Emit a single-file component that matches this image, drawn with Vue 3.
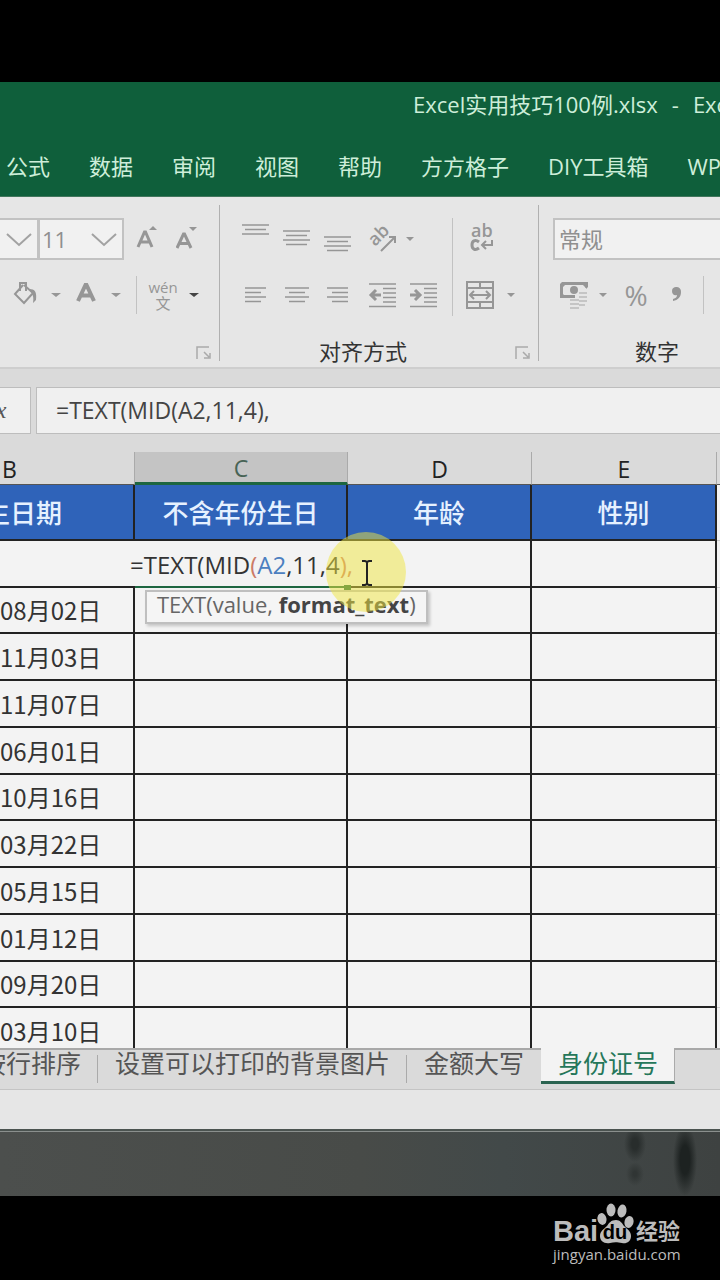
<template>
  <div class="screen">
    <header class="titlebar">
      <div class="doc-title">
        <span>Excel实用技巧100例.xlsx</span><span class="dash">-</span><span>Excel</span>
      </div>
      <nav class="menu">
        <a v-for="m in menus" :key="m" href="#">{{ m }}</a>
      </nav>
    </header>

    <section class="ribbon">
      <div class="group font-group">
        <div class="tools">
          <div class="row">
            <div class="combo combo-font">
              <select aria-label="字体"><option></option></select>
              <svg class="chevron" width="28" height="16" viewBox="0 0 28 16"><path d="M2 2l12 11L26 2" /></svg>
            </div>
            <div class="combo combo-size">
              <select aria-label="字号"><option>11</option></select>
              <svg class="chevron" width="28" height="16" viewBox="0 0 28 16"><path d="M2 2l12 11L26 2" /></svg>
            </div>
            <button class="tool wide first" aria-label="增大字号">
              <svg width="24" height="28" viewBox="0 0 24 28"><path class="line bold" d="M3 22L9.500 7h1L17 22M5.500 17h9" /><path class="solid" d="M14 5l4-4 4 4z" /></svg>
            </button>
            <button class="tool wide" aria-label="减小字号">
              <svg width="24" height="28" viewBox="0 0 24 28"><path class="line bold" d="M1 23L7.500 9h1L15 23M3.500 18.500h9" /><path class="solid" d="M13 2h8l-4 4z" /></svg>
            </button>
          </div>
          <div class="row fill-row">
            <button class="tool small" aria-label="填充颜色">
              <svg width="28" height="28" viewBox="0 0 28 28"><path class="line mid" d="M11 4L3 13l9 9 9-10-9-8M8 10V2h6v8" /><path class="solid" d="M17 8c6 0 8 3 7 11l-3 3c1-6 0-9-4-14z" /></svg>
            </button>
            <button class="tool drop" aria-label="更多填充颜色"><svg width="10" height="6"><path class="solid" d="M0 1h10L5 5z" /></svg></button>
            <button class="tool small" aria-label="字体颜色">
              <svg width="24" height="28" viewBox="0 0 24 28"><path class="line thick" d="M4 20L11.500 4h1L20 20M7 14.500h10" /></svg>
            </button>
            <button class="tool drop" aria-label="更多字体颜色"><svg width="10" height="6"><path class="solid" d="M0 1h10L5 5z" /></svg></button>
            <i class="divider short"></i>
            <button class="tool pinyin"><span>wén</span><span>文</span></button>
            <button class="tool drop dark" aria-label="拼音选项"><svg width="10" height="6"><path class="solid" d="M0 1h10L5 5z" /></svg></button>
          </div>
        </div>
        <svg class="launcher" width="16" height="16" viewBox="0 0 16 16"><path d="M1 14V2h12M8 7l5 5M14 8v5H8" /></svg>
      </div>

      <div class="group align-group">
        <div class="split">
          <div class="tools">
            <div class="row">
              <button v-for="(d, i) in vAlign" :key="i" class="tool wide" :aria-label="vNames[i]">
                <svg width="28" height="36" viewBox="0 0 28 36"><path class="line" :d="d" /></svg>
              </button>
              <button class="tool wide orient" aria-label="方向">
                <svg width="30" height="30" viewBox="0 0 30 30">
                  <text class="ab" x="8" y="23" transform="rotate(-45 8 23)">ab</text>
                  <path class="line mid" d="M14 27L28 13M22 13h6v6" />
                </svg>
              </button>
              <button class="tool drop" aria-label="更多方向"><svg width="8" height="6"><path class="solid" d="M0 1h8L4 5z" /></svg></button>
            </div>
            <div class="row">
              <button v-for="(d, i) in hAlign" :key="i" class="tool wide" :aria-label="hNames[i]">
                <svg width="28" height="28" viewBox="0 0 28 28"><path class="line" :d="d" /></svg>
              </button>
              <button class="tool wide orient" aria-label="减少缩进量">
                <svg width="28" height="28" viewBox="0 0 28 28"><path class="line" d="M1 3h27M15 7.500h13M15 12h13M15 16.500h13M15 21h13M1 25.500h27" /><path class="line heavy" d="M13 14H3M8 9l-5 5 5 5" /></svg>
              </button>
              <button class="tool wide" aria-label="增加缩进量">
                <svg width="28" height="28" viewBox="0 0 28 28"><path class="line" d="M1 3h27M15 7.500h13M15 12h13M15 16.500h13M15 21h13M1 25.500h27" /><path class="line heavy" d="M1 14h10M6 9l5 5-5 5" /></svg>
              </button>
            </div>
          </div>
          <i class="divider tall"></i>
          <div class="tools">
            <div class="row">
              <button class="tool wrap" aria-label="自动换行">
                <svg width="28" height="32" viewBox="0 0 28 32">
                  <text class="ab" x="5" y="14">ab</text>
                  <path class="line heavy" d="M13 19c-4-3-7-1-7 3s3 6 7 3" />
                  <path class="line mid" d="M26 17v5H16M20 18l-4 4 4 4" />
                </svg>
              </button>
            </div>
            <div class="row">
              <button class="tool wrap" aria-label="合并后居中">
                <svg width="28" height="30" viewBox="0 0 28 30"><path class="line mid" d="M1 2h26v26H1zM1 8h26M1 22h26M14 2v6M14 22v6M4 15h20M8 11l-4 4 4 4M20 11l4 4-4 4" /></svg>
              </button>
              <button class="tool drop" aria-label="合并选项"><svg width="8" height="6"><path class="solid" d="M0 1h8L4 5z" /></svg></button>
            </div>
          </div>
        </div>
        <div class="group-name">对齐方式</div>
        <svg class="launcher" width="16" height="16" viewBox="0 0 16 16"><path d="M1 14V2h12M8 7l5 5M14 8v5H8" /></svg>
      </div>

      <div class="group number-group">
        <div class="tools">
          <div class="row">
            <div class="combo combo-format">
              <select aria-label="数字格式"><option>常规</option></select>
            </div>
          </div>
          <div class="row number-row">
            <button class="tool money" aria-label="会计数字格式">
              <svg width="30" height="30" viewBox="0 0 30 30">
                <path class="line heavy" d="M2.500 3.500h25v4M16 16.500H2.500v-13" />
                <path class="solid" d="M2 3h6L2 9zM28 3h-6l6 6zM2 17v-5l5 5z" /><circle class="solid" cx="15" cy="10" r="4" />
                <path class="line faint" d="M20 13h8M20 17h8M20 21h8M20 25h6M11 20h9M11 24h9M11 28h9" />
              </svg>
            </button>
            <button class="tool drop" aria-label="更多货币"><svg width="8" height="6"><path class="solid" d="M0 1h8L4 5z" /></svg></button>
            <button class="tool percent">%</button>
            <button class="tool comma" aria-label="千位分隔样式">
              <svg width="12" height="18" viewBox="0 0 12 18"><path class="solid" d="M5 1a4.500 4.500 0 0 1 5 5c0 5-3 8-8 9v-2c3-1 4-2 4-4-3 1-5-1-5-4s2-4 4-4z" /></svg>
            </button>
            <i class="divider short"></i>
          </div>
        </div>
        <div class="group-name">数字</div>
      </div>
    </section>

    <section class="formula-bar">
      <button class="fx">fx</button>
      <input class="formula" type="text" aria-label="编辑栏" value="=TEXT(MID(A2,11,4)," />
    </section>

    <main class="sheet">
      <table>
        <colgroup><col class="b" /><col class="c" /><col class="d" /><col class="e" /><col /></colgroup>
        <thead>
          <tr class="letters"><th class="letter-b"><span>B</span></th><th class="picked">C</th><th>D</th><th>E</th><th></th></tr>
          <tr class="titles"><th class="date-title"><span>出生日期</span></th><th>不含年份生日</th><th>年龄</th><th>性别</th><th class="rest"></th></tr>
        </thead>
        <tbody>
          <tr class="editing">
            <td></td>
            <td class="active">
              <div class="editor">=TEXT(MID<span class="paren">(</span><span class="ref">A2</span>,11,4<span class="paren">),</span></div>
              <div class="hint">TEXT(value, <b>format_text</b>)</div>
              <i class="handle"></i>
              <svg class="pointer" width="82" height="82" viewBox="0 0 82 82">
                <circle cx="41" cy="41" r="40" />
                <path d="M37 30h3l2 1 2-1h3M42 31v22M37 54h3l2-1 2 1h3" />
              </svg>
            </td>
            <td></td><td></td><td class="rest"></td>
          </tr>
          <tr v-for="d in dates" :key="d"><td class="date">{{ d }}</td><td></td><td></td><td></td><td class="rest"></td></tr>
        </tbody>
      </table>
    </main>

    <nav class="tabs">
      <a class="tab sort" href="#"><span>按行排序</span></a>
      <a class="tab print" href="#">设置可以打印的背景图片</a>
      <a class="tab money-tab" href="#">金额大写</a>
      <a class="tab current" href="#">身份证号</a>
    </nav>
    <div class="statusbar"></div>
    <div class="desk"></div>

    <footer class="brand">
      <div class="brand-box">
        <div class="logo">
          <span class="bai">Bai</span>
          <svg class="paw" width="40" height="42" viewBox="0 0 40 42">
            <ellipse cx="6" cy="17" rx="4.500" ry="6" transform="rotate(-12 6 17)" />
            <ellipse cx="15" cy="8" rx="4.500" ry="6.500" />
            <ellipse cx="26" cy="9" rx="4.500" ry="6.500" transform="rotate(10 26 9)" />
            <ellipse cx="33" cy="20" rx="4.500" ry="6" transform="rotate(15 33 20)" />
            <path d="M20 18c4 0 6 3 8 6 3 3 7 5 7 10 0 6-5 8-9 7-5-1-8-1-12 0-6 1-10-2-10-7s4-7 7-10c2-3 4-6 9-6z" />
            <text x="19" y="37" text-anchor="middle">du</text>
          </svg>
          <span class="jy">经验</span>
        </div>
        <div class="url">jingyan.baidu.com</div>
      </div>
    </footer>
  </div>
</template>

<script setup>
const menus = ['公式', '数据', '审阅', '视图', '帮助', '方方格子', 'DIY工具箱', 'WPS']

const dates = [
  '08月02日', '11月03日', '11月07日', '06月01日', '10月16日',
  '03月22日', '05月15日', '01月12日', '09月20日', '03月10日'
]

const vNames = ['顶端对齐', '垂直居中', '底端对齐']
const vAlign = [
  'M0 4h27M3 8.5h21M0 13h27',
  'M0 10h27M3 14.5h21M0 19h27M3 23.5h21',
  'M0 16h27M3 20.5h21M0 25h27M3 29.5h21'
]
const hNames = ['左对齐', '居中', '右对齐']
const hAlign = [
  'M3 7h21M3 11.5h16M3 16h21M3 20.5h16',
  'M2 7h24M6 11.5h16M2 16h24M6 20.5h16',
  'M3 7h21M8 11.5h16M3 16h21M8 20.5h16'
]
</script>

<style>
body { margin:0; background:#000; }
</style>

<style scoped>
.screen { padding-top:82px; overflow:hidden; font-family:"Open Sans","Noto Sans CJK SC",sans-serif; color:#333; }
.screen * { box-sizing:border-box; }
a { color:inherit; text-decoration:none; }
button { padding:0; border:0; background:none; font-family:inherit; }
button svg { display:block; flex:none; }

.titlebar { height:115px; background:#0f5f3b; color:#cdeed9; white-space:nowrap; border-bottom:1px solid #41765c; }
.doc-title { display:flex; padding-left:413px; font-size:22px; line-height:44px; }
.dash { margin:0 14px; }
.menu { display:flex; gap:39px; padding:21px 0 0 6px; font-size:22px; line-height:38px; }

.ribbon { display:flex; height:172px; background:#e6e6e6; border-bottom:2px solid #cecece; }
.group { position:relative; padding-top:21px; flex:none; }
.group::after { content:""; position:absolute; right:0; top:8px; bottom:6px; width:1px; background:#b0b0b0; }
.font-group { width:220px; }
.align-group { width:319px; padding-left:15px; }
.number-group { flex:1; min-width:181px; padding-left:14px; overflow:hidden; }
.number-group::after { display:none; }
.split { display:flex; }
.tools { display:flex; flex-direction:column; gap:14px; }
.row { display:flex; align-items:center; height:42px; }
.group-name { margin-top:19px; font-size:22px; line-height:32px; color:#333; }
.align-group .group-name { padding-left:84px; }
.number-group .group-name { padding-left:82px; }
.tool { display:flex; align-items:center; justify-content:center; height:42px; flex:none; color:#969696; }
.tool.wide { width:41px; }
.tool.wide.first { margin-left:2px; }
.tool.small { width:36px; }
.tool.drop { width:24px; }
.tool.orient { margin-left:3px; }
.orient + .drop { width:16px; }
.tool.wrap { width:54px; }
.wrap + .drop { width:8px; }
.fill-row { padding-left:8px; }
.number-row { padding-left:4px; }
.tool.money { width:34px; }
.tool.percent { width:42px; font-size:28px; }
.tool.comma { width:40px; }
.tool.pinyin { flex-direction:column; width:52px; font-size:15px; line-height:16px; }
.pinyin + .drop { width:10px; color:#444; }
.divider { width:1px; height:38px; background:#c2c2c2; flex:none; }
.fill-row .divider { margin-left:8px; }
.number-row .divider { margin-left:6px; }
.divider.tall { height:98px; }
.align-group .split > .tools:first-child { width:217px; }
.line { fill:none; stroke:currentColor; stroke-width:1.5; }
.line.mid { stroke-width:2; }
.line.bold { stroke-width:3; }
.line.heavy { stroke-width:3; }
.line.thick { stroke-width:4; }
.line.faint { stroke:#bbb; }
.solid { fill:currentColor; }
.ab { font-size:18px; font-weight:600; fill:currentColor; }
.launcher { position:absolute; right:8px; bottom:6px; fill:none; stroke:#aaa; stroke-width:1.5; }

.combo { position:relative; height:42px; border:2px solid #c2c2c2; background:#f1f1f1; flex:none; }
.combo select { width:100%; height:100%; padding:0 4px; border:0; background:none; appearance:none; color:#8f8f8f; font-family:inherit; font-size:22px; }
.combo-font { width:38px; border-left:0; border-right:1px solid #c2c2c2; }
.combo-size { width:86px; }
.combo-size select { padding:0 2px; }
.combo-format { flex:1; border-right:0; }
.chevron { position:absolute; right:4px; top:12px; fill:none; stroke:#a2a2a2; stroke-width:2; pointer-events:none; }

.formula-bar { display:flex; gap:5px; height:83px; padding:18px 0 18px; background:#dadada; }
.fx { width:31px; overflow:hidden; border:1px solid #bdbdbd; border-left:0; background:#f0f0f0; text-align:left; text-indent:-11px; font:italic 24px "Liberation Serif",serif; color:#555; }
.formula { flex:1; min-width:0; padding:0 0 2px 19px; border:1px solid #bdbdbd; border-right:0; background:#f0f0f0; font-family:"Open Sans",sans-serif; font-size:23px; color:#444; }

.sheet { height:596px; overflow:hidden; background:#f3f3f3; }
table { width:100%; border-spacing:0; table-layout:fixed; }
col.b { width:135px; }
col.c { width:213px; }
col.d { width:184px; }
col.e { width:185px; }
th, td { padding:0; border-right:2px solid #222; border-bottom:2px solid #222; font-size:24px; }
.letters th { height:33px; padding-top:2px; background:#dadada; border-right:1px solid #aaa; border-bottom:1px solid #555; font-size:23px; font-weight:400; line-height:30px; color:#222; }
.letters .letter-b { text-align:left; }
.letter-b span { margin-left:2px; }
.letters .picked { background:#c4c4c4; border-bottom:3px solid #1d6640; color:#486355; line-height:28px; }
.titles th { height:56px; background:#2f63b9; font-size:26px; font-weight:500; line-height:54px; color:#e6f1ff; white-space:nowrap; font-family:"Noto Sans CJK SC",sans-serif; }
.date-title span { float:right; margin-right:71px; }
tbody td { height:47px; line-height:45px; }
tbody tr:nth-child(4n + 2) td { height:46px; line-height:44px; }
.date { padding-right:35px; text-align:right; color:#333; font-family:"Noto Sans CJK SC",sans-serif; white-space:nowrap; }
.letters th:last-child { border-right:0; }
.titles .rest, .rest { border-right:0; border-bottom:1px solid #ccc; background:#f3f3f3; }
.editing td:nth-child(-n + 2) { border-right:0; }
.editing .active { position:relative; border-bottom-color:#1d6640; }
.editor { position:absolute; left:-5px; top:0; font-size:24px; line-height:48px; white-space:nowrap; color:#333; }
.paren { color:#cc7a66; }
.ref { color:#4c7fc0; }
.hint { position:absolute; left:10px; top:49px; z-index:1; padding:0 10px; height:34px; border:2px solid #bfbfbf; background:#f5f5f5; box-shadow:2px 2px 3px #0003; font-size:22px; line-height:25px; color:#666; white-space:nowrap; }
.hint b { color:#444; }
.handle { position:absolute; right:-3px; bottom:-4px; width:7px; height:5px; background:#1d6640; }
.pointer { position:absolute; left:190px; top:-10px; z-index:2; }
.pointer circle { fill:#f0e640; fill-opacity:.5; }
.pointer path { fill:none; stroke:#222; stroke-width:2; }

.tabs { display:flex; height:42px; background:#dadada; border-top:2px solid #a8a8a8; border-bottom:1px solid #c4c4c4; font-size:25px; line-height:26px; color:#555; white-space:nowrap; }
.tab { position:relative; flex:none; height:35px; }
.tab.sort { display:flex; justify-content:flex-end; width:98px; padding-right:17px; }
.tab.print { width:309px; padding-left:17px; }
.tab.money-tab { width:134px; padding-left:17px; }
.tab.sort::after, .tab.print::after { content:""; position:absolute; right:0; top:5px; width:1px; height:28px; background:#aaa; }
.tab.current { width:134px; height:36px; margin-top:-2px; padding:2px 0 0 17px; border-right:1px solid #aaa; border-bottom:3px solid #2a6350; background:#f3f3f3; color:#25775a; }
.statusbar { height:41px; background:#e6e6e6; border-bottom:2px solid #4b5350; }
.desk { height:65px; border-top:1px solid #8a8f8d;
  background:
    radial-gradient(ellipse 12px 36px at 685px 28px, #1d2221 40%, transparent),
    radial-gradient(ellipse 11px 18px at 635px 12px, #282d2c 30%, transparent),
    radial-gradient(ellipse 9px 12px at 635px 42px, #303534 20%, transparent),
    linear-gradient(90deg, #4c4f4d, #484b48 50%, #424949 70%, #3e4241);
}

.brand { display:flex; justify-content:flex-end; height:84px; padding:6px 40px 0 0; background:#000; color:#bcbcbc; }
.brand-box { width:127px; }
.logo { display:flex; align-items:flex-end; height:42px; white-space:nowrap; }
.bai { width:43px; font:700 29px/26px "Liberation Sans",sans-serif; }
.paw { fill:#bcbcbc; flex:none; }
.paw text { fill:#000; font:700 20px "Liberation Sans",sans-serif; }
.jy { font:700 22px/30px "Noto Sans CJK SC",sans-serif; }
.url { font-size:15px; line-height:20px; }
</style>
